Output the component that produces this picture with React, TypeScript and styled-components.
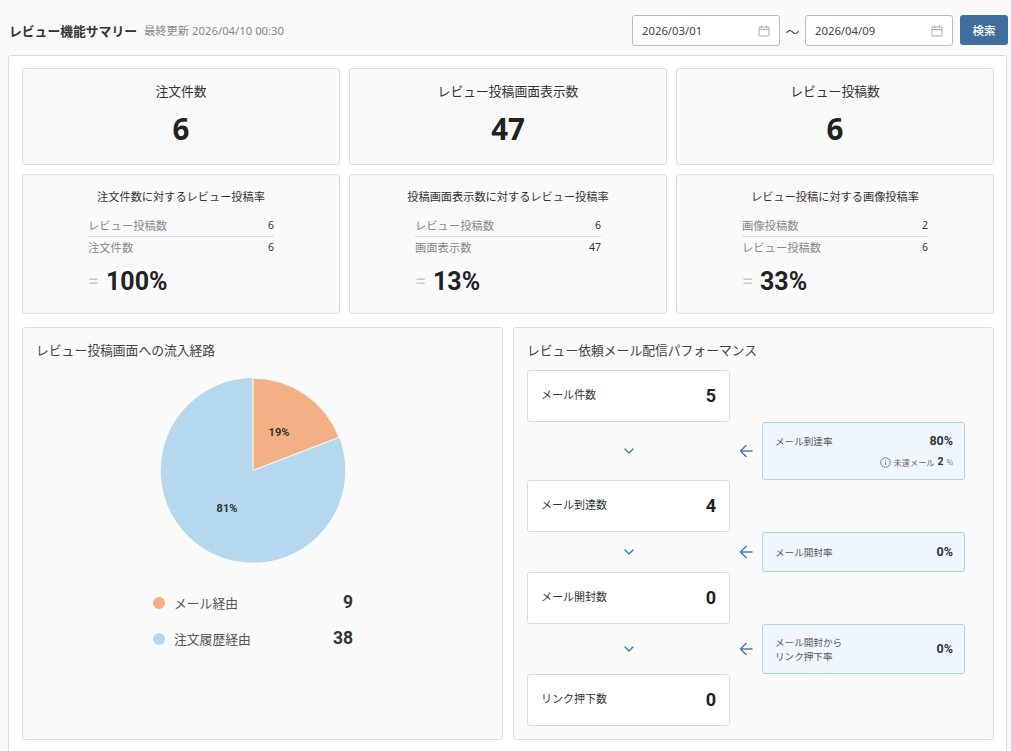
import React from 'react';
import styled, { createGlobalStyle } from 'styled-components';

const JP = `"Noto Sans CJK JP", "Noto Sans", sans-serif`;
const NUM = `Roboto, "Noto Sans CJK JP", sans-serif`;

const Global = createGlobalStyle`
  html, body { margin: 0; padding: 0; height: 751px; overflow: hidden; background: #fafafa; }
  body { font-family: ${JP}; color: #333; }
  * { box-sizing: border-box; }
`;

const Page = styled.div`
  width: 1011px;
  height: 751px;
  padding: 0 4px 0 8px;
  overflow: hidden;
`;
const Header = styled.header`
  height: 55px;
  padding: 15px 0 0 1px;
  margin-right: -1px;
  display: flex;
  align-items: flex-start;
`;
const TitleBlock = styled.div`
  flex: 1;
  height: 30px;
  display: flex;
  align-items: center;
  gap: 7px;
`;
const Title = styled.h1`
  margin: 0;
  font-size: 12.8px;
  font-weight: 700;
  color: #333;
`;
const Updated = styled.span`
  font-size: 11.3px;
  color: #888;
  font-family: "Noto Sans", ${JP};
`;
const DateField = styled.div`
  width: 148px;
  height: 31px;
  background: #fff;
  border: 1px solid #bbb;
  border-radius: 3px;
  display: flex;
  align-items: center;
  justify-content: space-between;
  padding: 0 9px 0 9px;
  font-size: 11.3px;
  font-family: "Noto Sans", ${JP};
  color: #444;
`;
const Tilde = styled.span`
  width: 25px;
  height: 31px;
  display: flex;
  align-items: center;
  justify-content: center;
  font-size: 14px;
  color: #555;
`;
const SearchButton = styled.button`
  width: 48px;
  height: 30px;
  margin-left: 7px;
  border: none;
  border-radius: 3px;
  background: #3f6e9e;
  color: #fff;
  font-family: ${JP};
  font-size: 11.5px;
  font-weight: 500;
  padding: 0;
`;
const Panel = styled.main`
  background: #fff;
  border: 1px solid #ddd;
  border-radius: 3px;
  padding: 12px 13px 10px 13px;
  height: 720px;
  display: flex;
  flex-direction: column;
`;
const Row = styled.div`
  display: grid;
  grid-template-columns: repeat(3, 318px);
  gap: 9px;
  margin-bottom: 9px;
`;
const Card = styled.section`
  background: #fafafa;
  border: 1px solid #ddd;
  border-radius: 3px;
`;
const KpiCard = styled(Card)`
  height: 97px;
  display: flex;
  flex-direction: column;
  align-items: center;
  padding-top: 12px;
`;
const KpiLabel = styled.div`
  font-size: 12.8px;
  line-height: 20px;
  color: #333;
`;
const KpiValue = styled.div`
  font-family: "Noto Sans", ${JP};
  font-size: 29.5px;
  font-weight: 700;
  line-height: 40px;
  margin-top: 8px;
  color: #222;
`;
const RatioCard = styled(Card)`
  height: 140px;
  padding: 12px 65px 0 65px;
  display: flex;
  flex-direction: column;
`;
const RatioTitle = styled.div`
  font-size: 11.2px;
  line-height: 18px;
  text-align: center;
  color: #333;
  margin: 0 -50px 10px;
  white-space: nowrap;
`;
const RatioRowTop = styled.div`
  height: 22px;
  padding-bottom: 1px;
  display: flex;
  align-items: center;
  justify-content: space-between;
  border-bottom: 1px solid #ddd;
  font-size: 11.3px;
  color: #888;
`;
const RatioRowBottom = styled.div`
  height: 19px;
  display: flex;
  align-items: center;
  justify-content: space-between;
  font-size: 11.3px;
  color: #888;
`;
const RatioNum = styled.span`
  font-family: "Noto Sans", ${JP};
  font-size: 10.5px;
  color: #333;
`;
const Result = styled.div`
  margin-top: 7px;
  display: flex;
  align-items: center;
  gap: 7px;
  height: 36px;
`;
const Equal = styled.span`
  font-family: ${NUM};
  font-size: 20px;
  color: #ccc;
  width: 11px;
`;
const ResultValue = styled.span`
  font-family: ${NUM};
  font-size: 25px;
  font-weight: 700;
  color: #222;
`;
const Bottom = styled.div`
  margin-top: 4px;
  display: grid;
  grid-template-columns: 481px 481px;
  gap: 10px;
`;
const BottomCard = styled(Card)`
  height: 413px;
  padding: 12px 13px 0 13px;
`;
const SectionTitle = styled.h2`
  margin: 0;
  font-size: 12.8px;
  line-height: 20px;
  font-weight: 400;
  color: #444;
`;
const PieWrap = styled.div`
  margin: 17px 0 0 124px;
  width: 186px;
  height: 186px;
  position: relative;
`;
const PieLabel = styled.span`
  position: absolute;
  transform: translate(-50%, -50%);
  font-family: ${NUM};
  font-size: 11px;
  font-weight: 700;
  color: #333;
`;
const Legend = styled.div`
  margin: 21px 0 0 117px;
  width: 200px;
`;
const LegendRow = styled.div`
  height: 36px;
  display: flex;
  align-items: center;
  font-size: 12.8px;
  color: #555;
`;
const Dot = styled.span<{ $c: string }>`
  width: 12px;
  height: 12px;
  border-radius: 50%;
  background: ${p => p.$c};
  margin: 2px 9px 0 0;
`;
const LegendValue = styled.span`
  margin-left: auto;
  font-family: ${NUM};
  font-size: 17.5px;
  font-weight: 700;
  color: #333;
`;
const Flow = styled.div`
  margin-top: 10px;
`;
const StepBox = styled.div`
  width: 203px;
  height: 52px;
  background: #fff;
  border: 1px solid #ddd;
  border-radius: 3px;
  display: flex;
  align-items: center;
  justify-content: space-between;
  padding: 0 13px 4px 13px;
  font-size: 11px;
  color: #333;
`;
const StepValue = styled.span`
  font-family: ${NUM};
  font-size: 18px;
  font-weight: 700;
  color: #222;
  margin-top: 2px;
`;
const Connector = styled.div<{ $h: number }>`
  display: grid;
  grid-template-columns: 203px 32px 203px;
  height: ${p => p.$h}px;
  align-items: center;
`;
const IconCell = styled.div`
  display: flex;
  justify-content: center;
  align-items: center;
  color: #4a7dab;
`;
const RateBox = styled.div`
  height: 100%;
  background: #f0f6fd;
  border: 1px solid #a8d4f0;
  border-radius: 3px;
  padding: 0 11px 0 12px;
  display: flex;
  flex-direction: column;
  justify-content: center;
`;
const RateMain = styled.div`
  display: flex;
  justify-content: space-between;
  align-items: center;
  font-size: 9.6px;
  line-height: 14px;
  color: #555;
`;
const RateValue = styled.span`
  font-family: ${NUM};
  font-size: 12.5px;
  font-weight: 700;
  color: #333;
`;
const RateSub = styled.div`
  margin-top: 8px;
  display: flex;
  justify-content: flex-end;
  align-items: center;
  gap: 3px;
  font-size: 8.2px;
  line-height: 12px;
  color: #666;
`;
const SubNum = styled.span`
  font-family: ${NUM};
  font-size: 10.5px;
  font-weight: 700;
  color: #333;
`;
const SubPct = styled.span`
  font-size: 7px;
  color: #777;
`;

const CalendarIcon = () => (
  <svg width="12" height="12" viewBox="0 0 12 12" fill="none" stroke="#aaa" strokeWidth="1">
    <rect x="1" y="2" width="10" height="9" rx="0.5" />
    <path d="M1 4.5h10M3.5 .5v2.5M8.5 .5v2.5" />
  </svg>
);
const Chevron = () => (
  <svg width="12" height="8" viewBox="0 0 12 8" fill="none" stroke="currentColor" strokeWidth="1.5" strokeLinecap="round" strokeLinejoin="round">
    <path d="M2 2l4 4 4-4" />
  </svg>
);
const ArrowLeft = () => (
  <svg width="14" height="14" viewBox="0 0 14 14" fill="none" stroke="currentColor" strokeWidth="1.5" strokeLinecap="round" strokeLinejoin="round">
    <path d="M13 7H1.5M7 1.5L1.5 7 7 12.5" />
  </svg>
);
const InfoIcon = () => (
  <svg width="11" height="11" viewBox="0 0 11 11" fill="none" stroke="#4a7dab" strokeWidth="0.9">
    <circle cx="5.5" cy="5.5" r="4.8" />
    <path d="M5.5 5v3M5.5 3v.9" />
  </svg>
);

const Kpi = ({ label, value }: { label: string; value: string }) => (
  <KpiCard>
    <KpiLabel>{label}</KpiLabel>
    <KpiValue>{value}</KpiValue>
  </KpiCard>
);

const Ratio = ({ title, a, av, b, bv, result }: { title: string; a: string; av: string; b: string; bv: string; result: string }) => (
  <RatioCard>
    <RatioTitle>{title}</RatioTitle>
    <RatioRowTop><span>{a}</span><RatioNum>{av}</RatioNum></RatioRowTop>
    <RatioRowBottom><span>{b}</span><RatioNum>{bv}</RatioNum></RatioRowBottom>
    <Result><Equal>=</Equal><ResultValue>{result}</ResultValue></Result>
  </RatioCard>
);

const Step = ({ label, value }: { label: string; value: string }) => (
  <StepBox><span>{label}</span><StepValue>{value}</StepValue></StepBox>
);

const Link = ({ h, children }: { h: number; children: React.ReactNode }) => (
  <Connector $h={h}>
    <IconCell><Chevron /></IconCell>
    <IconCell><ArrowLeft /></IconCell>
    <RateBox>{children}</RateBox>
  </Connector>
);

export default function App() {
  return (
    <Page>
      <Global />
      <Header>
        <TitleBlock>
          <Title>レビュー機能サマリー</Title>
          <Updated>最終更新 2026/04/10 00:30</Updated>
        </TitleBlock>
        <DateField>2026/03/01<CalendarIcon /></DateField>
        <Tilde>〜</Tilde>
        <DateField>2026/04/09<CalendarIcon /></DateField>
        <SearchButton>検索</SearchButton>
      </Header>
      <Panel>
        <Row>
          <Kpi label="注文件数" value="6" />
          <Kpi label="レビュー投稿画面表示数" value="47" />
          <Kpi label="レビュー投稿数" value="6" />
        </Row>
        <Row>
          <Ratio title="注文件数に対するレビュー投稿率" a="レビュー投稿数" av="6" b="注文件数" bv="6" result="100%" />
          <Ratio title="投稿画面表示数に対するレビュー投稿率" a="レビュー投稿数" av="6" b="画面表示数" bv="47" result="13%" />
          <Ratio title="レビュー投稿に対する画像投稿率" a="画像投稿数" av="2" b="レビュー投稿数" bv="6" result="33%" />
        </Row>
        <Bottom>
          <BottomCard>
            <SectionTitle>レビュー投稿画面への流入経路</SectionTitle>
            <PieWrap>
              <svg width="186" height="186" viewBox="0 0 186 186">
                <circle cx="93" cy="93.4" r="92.3" fill="#b5d8ee" />
                <path d="M93 93.4V1.1A92.3 92.3 0 0 1 179.1 60.3Z" fill="#f2b084" stroke="#fff" strokeWidth="1" strokeLinejoin="round" />
              </svg>
              <PieLabel style={{ left: 119, top: 55 }}>19%</PieLabel>
              <PieLabel style={{ left: 67, top: 131 }}>81%</PieLabel>
            </PieWrap>
            <Legend>
              <LegendRow><Dot $c="#f2b084" />メール経由<LegendValue>9</LegendValue></LegendRow>
              <LegendRow><Dot $c="#b5d8ee" />注文履歴経由<LegendValue>38</LegendValue></LegendRow>
            </Legend>
          </BottomCard>
          <BottomCard>
            <SectionTitle>レビュー依頼メール配信パフォーマンス</SectionTitle>
            <Flow>
              <Step label="メール件数" value="5" />
              <Link h={58}>
                <RateMain><span>メール到達率</span><RateValue>80%</RateValue></RateMain>
                <RateSub><InfoIcon />未達メール <SubNum>2</SubNum><SubPct>%</SubPct></RateSub>
              </Link>
              <Step label="メール到達数" value="4" />
              <Link h={40}>
                <RateMain><span>メール開封率</span><RateValue>0%</RateValue></RateMain>
              </Link>
              <Step label="メール開封数" value="0" />
              <Link h={50}>
                <RateMain><span>メール開封から<br />リンク押下率</span><RateValue>0%</RateValue></RateMain>
              </Link>
              <Step label="リンク押下数" value="0" />
            </Flow>
          </BottomCard>
        </Bottom>
      </Panel>
    </Page>
  );
}
